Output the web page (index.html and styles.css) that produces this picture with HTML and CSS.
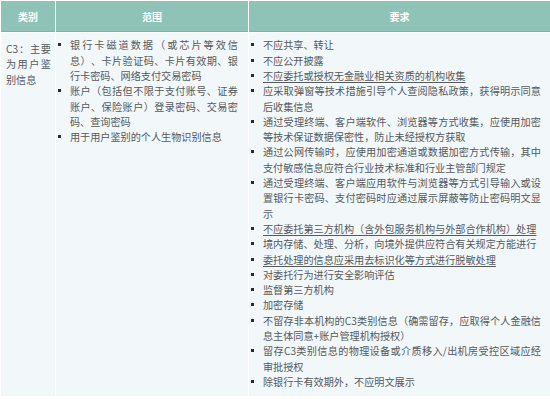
FILE: index.html
```html
<!DOCTYPE html>
<html lang="zh-CN">
<head>
<meta charset="utf-8">
<title>C3 类别信息要求</title>
<link rel="stylesheet" href="styles.css">
</head>
<body>
<div class="tbl">
  <div class="hd">类别</div>
  <div class="hd">范围</div>
  <div class="hd">要求</div>
  <div class="cell c1">C3：主要为用户鉴别信息</div>
  <ul class="cell c2">
    <li><span>银行卡磁道数据（或芯片等效信息）、卡片验证码、卡片有效期、银行卡密码、网络支付交易密码</span></li>
    <li><span>账户（包括但不限于支付账号、证券账户、保险账户）登录密码、交易密码、查询密码</span></li>
    <li><span>用于用户鉴别的个人生物识别信息</span></li>
  </ul>
  <ul class="cell c3">
    <li><span>不应共享、转让</span></li>
    <li><span>不应公开披露</span></li>
    <li><span class="u">不应委托或授权无金融业相关资质的机构收集</span></li>
    <li><span>应采取弹窗等技术措施引导个人查阅隐私政策，获得明示同意后收集信息</span></li>
    <li><span>通过受理终端、客户端软件、浏览器等方式收集，应使用加密等技术保证数据保密性，防止未经授权方获取</span></li>
    <li><span>通过公网传输时，应使用加密通道或数据加密方式传输，其中支付敏感信息应符合行业技术标准和行业主管部门规定</span></li>
    <li><span>通过受理终端、客户端应用软件与浏览器等方式引导输入或设置银行卡密码、支付密码时应通过展示屏蔽等防止密码明文显示</span></li>
    <li><span class="u">不应委托第三方机构（含外包服务机构与外部合作机构）处理</span></li>
    <li><span>境内存储、处理、分析，向境外提供应符合有关规定方能进行</span></li>
    <li><span class="u">委托处理的信息应采用去标识化等方式进行脱敏处理</span></li>
    <li><span>对委托行为进行安全影响评估</span></li>
    <li><span>监督第三方机构</span></li>
    <li><span>加密存储</span></li>
    <li><span>不留存非本机构的C3类别信息（确需留存，应取得个人金融信息主体同意+账户管理机构授权）</span></li>
    <li><span>留存C3类别信息的物理设备或介质移入/出机房受控区域应经审批授权</span></li>
    <li><span>除银行卡有效期外，不应明文展示</span></li>
  </ul>
</div>
</body>
</html>
```

FILE: styles.css
```css
html, body {
  margin: 0;
  padding: 0;
  background: #ffffff;
}

body {
  font-family: "Noto Sans CJK SC", "Noto Sans", sans-serif;
  font-size: 10.15px;
  color: #555a5c;
  text-spacing-trim: space-all;
}

.tbl {
  display: grid;
  grid-template-columns: 54px 192px 1fr;
  grid-template-rows: 31px auto;
  column-gap: 1px;
  row-gap: 1px;
  padding: 1px 0 3px 1px;
  background: #ffffff;
}

.hd {
  background: #8fc3b7;
  border-bottom: 1px solid #7cb4a7;
  color: #ffffff;
  font-weight: bold;
  font-size: 10px;
  display: flex;
  align-items: center;
  justify-content: center;
}

.cell {
  background: #f2f7fa;
  margin: 0;
  line-height: 15.3px;
  text-align: justify;
}

.c1 {
  padding: 8px 4px 0 5px;
}

ul.cell {
  list-style: none;
}

.c2 {
  padding: 4.4px 10px 0 2px;
}

.c3 {
  padding: 4.4px 9px 6.7px 2px;
}

.cell li {
  display: flex;
  align-items: flex-start;
}

.cell li::before {
  content: "";
  flex: none;
  width: 3px;
  height: 3px;
  margin-top: 6px;
  margin-right: 9px;
  background: #2b2b2b;
}

.cell li span {
  flex: 1;
  min-width: 0;
}

.u {
  text-decoration: underline;
  text-underline-offset: 2px;
}
```
